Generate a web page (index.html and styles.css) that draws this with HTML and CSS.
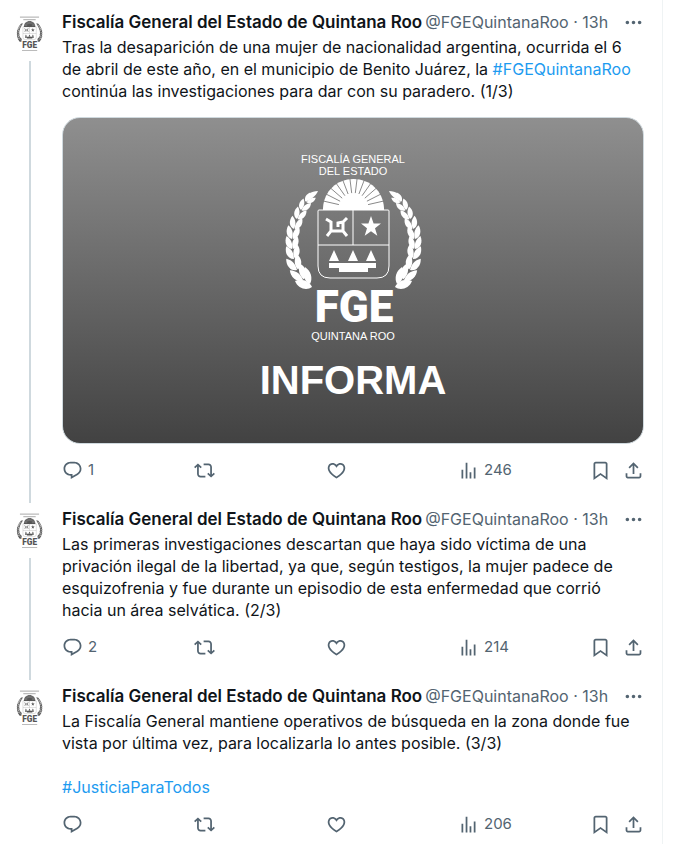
FILE: index.html
```html
<!doctype html>
<html lang="es">
	<head>
		<meta charset="utf-8"/>
		<meta name="viewport" content="width=device-width, initial-scale=1"/>
		<title>Fiscalía General del Estado de Quintana Roo</title>
		<link rel="stylesheet" href="styles.css">
	</head>
	<body>
		<svg class="sprite" aria-hidden="true">
			<symbol id="reply" viewBox="0 0 24 24"><path d="M1.751 10c0-4.42 3.584-8 8.005-8h4.366c4.49 0 8.129 3.64 8.129 8.13 0 2.96-1.607 5.68-4.196 7.11l-8.054 4.46v-3.69h-.067c-4.49.1-8.183-3.51-8.183-8.01zm8.005-6c-3.317 0-6.005 2.69-6.005 6 0 3.37 2.77 6.08 6.138 6.01l.351-.01h1.761v2.3l5.087-2.81c1.951-1.08 3.163-3.13 3.163-5.36 0-3.39-2.744-6.13-6.129-6.13H9.756z"/></symbol>
			<symbol id="retweet" viewBox="0 0 24 24"><path d="M4.5 3.88l4.432 4.14-1.364 1.46L5.5 7.55V16c0 1.1.896 2 2 2H13v2H7.5c-2.209 0-4-1.79-4-4V7.55L1.432 9.48.068 8.02 4.5 3.88zM16.5 6H11V4h5.5c2.209 0 4 1.79 4 4v8.45l2.068-1.93 1.364 1.46-4.432 4.14-4.432-4.14 1.364-1.46 2.068 1.93V8c0-1.1-.896-2-2-2z"/></symbol>
			<symbol id="like" viewBox="0 0 24 24"><path d="M16.697 5.5c-1.222-.06-2.679.51-3.89 2.16l-.805 1.09-.806-1.09C9.984 6.01 8.526 5.44 7.304 5.5c-1.243.07-2.349.78-2.91 1.91-.552 1.12-.633 2.78.479 4.82 1.074 1.97 3.257 4.27 7.129 6.61 3.87-2.34 6.052-4.64 7.126-6.61 1.111-2.04 1.03-3.7.477-4.82-.561-1.13-1.666-1.84-2.908-1.91zm4.187 7.69c-1.351 2.48-4.001 5.12-8.379 7.67l-.503.3-.504-.3c-4.379-2.55-7.029-5.19-8.382-7.67-1.36-2.5-1.41-4.86-.514-6.67.887-1.79 2.647-2.91 4.601-3.01 1.651-.09 3.368.56 4.798 2.01 1.429-1.45 3.146-2.1 4.796-2.01 1.954.1 3.714 1.22 4.601 3.01.896 1.81.846 4.17-.514 6.67z"/></symbol>
			<symbol id="views" viewBox="0 0 24 24"><path d="M8.75 21V3h2v18h-2zM18 21V8.5h2V21h-2zM4 21l.004-10h2L6 21H4zm9.248 0v-7h2v7h-2z"/></symbol>
			<symbol id="bookmark" viewBox="0 0 24 24"><path d="M4 4.5C4 3.12 5.119 2 6.5 2h11C18.881 2 20 3.12 20 4.5v18.44l-8-5.71-8 5.71V4.5zM6.5 4c-.276 0-.5.22-.5.5v14.56l6-4.29 6 4.29V4.5c0-.28-.224-.5-.5-.5h-11z"/></symbol>
			<symbol id="share" viewBox="0 0 24 24"><path d="M12 2.59l5.7 5.7-1.41 1.42L13 6.41V16h-2V6.41l-3.3 3.3-1.41-1.42L12 2.59zM21 15l-.02 3.51c0 1.38-1.12 2.49-2.5 2.49H5.5C4.11 21 3 19.88 3 18.5V15h2v3.5c0 .28.22.5.5.5h12.98c.28 0 .5-.22.5-.5L19 15h2z"/></symbol>
			<symbol id="more" viewBox="0 0 24 24"><path d="M3 12c0-1.1.9-2 2-2s2 .9 2 2-.9 2-2 2-2-.9-2-2zm9 2c1.1 0 2-.9 2-2s-.9-2-2-2-2 .9-2 2 .9 2 2 2zm7 0c1.1 0 2-.9 2-2s-.9-2-2-2-2 .9-2 2 .9 2 2 2z"/></symbol>

			<!-- laurel leaves, one pair -->
			<g id="leaf">
				<path d="M0 0C-6-1-8-8-5-14C0-10 1-6 0 0z"/>
				<path d="M1 0C-1-6 2-11 6-14C9-8 7-2 1 0z"/>
			</g>
			<g id="laurel">
				<path d="M29 135C24 139 15 137 12 129C19 126 26 129 29 135z"/>
				<path d="M27 132C20 129 20 121 22 115C28 119 30 126 27 132z"/>
				<use href="#leaf" transform="translate(20 128) rotate(-34) scale(1.1)"/>
				<use href="#leaf" transform="translate(14 118) rotate(-24) scale(1.05)"/>
				<use href="#leaf" transform="translate(11 107) rotate(-12)"/>
				<use href="#leaf" transform="translate(9 97) rotate(-3) scale(.95)"/>
				<use href="#leaf" transform="translate(9 87) rotate(5) scale(.95)"/>
				<use href="#leaf" transform="translate(11 77) rotate(13) scale(.9)"/>
				<use href="#leaf" transform="translate(14 67) rotate(24) scale(.85)"/>
				<use href="#leaf" transform="translate(18 58) rotate(32) scale(.8)"/>
				<use href="#leaf" transform="translate(23 50) rotate(44) scale(.7)"/>
				<path d="M22 49C23 43 28 39 35 39C33 44 28 48 22 49z"/>
			</g>
			<mask id="rays">
				<rect width="140" height="192" fill="#fff"/>
				<path stroke="#000" stroke-width=".9" d="M72.300 41.100L74.400 24.200M75.900 42L82 26.100M79.100 43.700L88.900 29.800M81.800 46.200L94.700 35M83.900 49.200L99 41.500M85.100 52.600L101.700 48.800M68.700 41.100L66.600 24.200M65.100 42L59 26.100M61.900 43.700L52.100 29.800M59.200 46.200L46.300 35M57.100 49.200L42 41.500M55.900 52.600L39.300 48.800"/>
			</mask>
			<!-- sun, shield and laurels -->
			<g id="emblem">
				<use href="#laurel"/>
				<use href="#laurel" transform="translate(141 0) scale(-1 1)"/>
				<path mask="url(#rays)" d="M40 58v-2C41 39 54 27 70.500 27S100 39 101 56v2z"/>
				<path class="emblem-line" d="M36 58h69q1 0 1 1v55q0 12-12 12H47q-12 0-12-12V59q0-1 1-1zM70 58v35M35 93h71"/>
				<path class="emblem-bird" d="M43 67l5 3v9l-4 5M48 79h12l4 5M60 80V70l4-4M60 70l-5 1v4"/>
				<path d="M88 64l2.600 7.500H98l-6 4.700 2.300 7.500L88 79.200l-6.300 4.500L84 76.200l-6-4.700h7.400z"/>
				<path d="M51 98l5 11H46zM70 98l5 11H65zM88 98l5 11H83zM46 111h47v5h-8v4H56v-4H46z"/>
			</g>
		</svg>

		<main class="timeline">
			<article class="tweet">
				<div class="thread">
					<a class="avatar" href="#" aria-label="FGEQuintanaRoo">
						<svg viewBox="0 0 140 192">
							<path class="avatar-line" d="M19 6h102M37 19h66M30 184h81"/>
							<use href="#emblem"/>
							<text class="emblem-logo" x="71" y="170">FGE</text>
						</svg>
					</a>
				</div>
				<div class="content">
					<header class="head">
						<a class="name" href="#">Fiscalía General del Estado de Quintana Roo</a>
						<span class="handle">@FGEQuintanaRoo · <time>13h</time></span>
						<button class="more" aria-label="Más"><svg class="icon"><use href="#more"/></svg></button>
					</header>
					<p class="text">Tras la desaparición de una mujer de nacionalidad argentina, ocurrida el 6 de abril de este año, en el municipio de Benito Juárez, la <a href="#">#FGEQuintanaRoo</a> continúa las investigaciones para dar con su paradero. (1/3)</p>
					<div class="media">
						<svg class="media-emblem" viewBox="0 0 140 192">
							<text class="emblem-text" x="70" y="11">FISCALÍA GENERAL</text>
							<text class="emblem-text" x="70" y="23">DEL ESTADO</text>
							<use href="#emblem"/>
							<text class="emblem-logo" x="71" y="170">FGE</text>
							<text class="emblem-text" x="70" y="188">QUINTANA ROO</text>
						</svg>
						<strong class="media-title">INFORMA</strong>
					</div>
					<div class="actions">
						<button aria-label="Responder"><svg class="icon"><use href="#reply"/></svg><span>1</span></button>
						<button aria-label="Repostear"><svg class="icon"><use href="#retweet"/></svg></button>
						<button aria-label="Me gusta"><svg class="icon"><use href="#like"/></svg></button>
						<button aria-label="Vistas"><svg class="icon"><use href="#views"/></svg><span>246</span></button>
						<div class="tools">
							<button aria-label="Guardar"><svg class="icon"><use href="#bookmark"/></svg></button>
							<button aria-label="Compartir"><svg class="icon"><use href="#share"/></svg></button>
						</div>
					</div>
				</div>
			</article>

			<article class="tweet">
				<div class="thread">
					<a class="avatar" href="#" aria-label="FGEQuintanaRoo">
						<svg viewBox="0 0 140 192">
							<path class="avatar-line" d="M19 6h102M37 19h66M30 184h81"/>
							<use href="#emblem"/>
							<text class="emblem-logo" x="71" y="170">FGE</text>
						</svg>
					</a>
				</div>
				<div class="content">
					<header class="head">
						<a class="name" href="#">Fiscalía General del Estado de Quintana Roo</a>
						<span class="handle">@FGEQuintanaRoo · <time>13h</time></span>
						<button class="more" aria-label="Más"><svg class="icon"><use href="#more"/></svg></button>
					</header>
					<p class="text">Las primeras investigaciones descartan que haya sido víctima de una privación ilegal de la libertad, ya que, según testigos, la mujer padece de esquizofrenia y fue durante un episodio de esta enfermedad que corrió hacia un área selvática. (2/3)</p>
					<div class="actions">
						<button aria-label="Responder"><svg class="icon"><use href="#reply"/></svg><span>2</span></button>
						<button aria-label="Repostear"><svg class="icon"><use href="#retweet"/></svg></button>
						<button aria-label="Me gusta"><svg class="icon"><use href="#like"/></svg></button>
						<button aria-label="Vistas"><svg class="icon"><use href="#views"/></svg><span>214</span></button>
						<div class="tools">
							<button aria-label="Guardar"><svg class="icon"><use href="#bookmark"/></svg></button>
							<button aria-label="Compartir"><svg class="icon"><use href="#share"/></svg></button>
						</div>
					</div>
				</div>
			</article>

			<article class="tweet">
				<div class="thread">
					<a class="avatar" href="#" aria-label="FGEQuintanaRoo">
						<svg viewBox="0 0 140 192">
							<path class="avatar-line" d="M19 6h102M37 19h66M30 184h81"/>
							<use href="#emblem"/>
							<text class="emblem-logo" x="71" y="170">FGE</text>
						</svg>
					</a>
				</div>
				<div class="content">
					<header class="head">
						<a class="name" href="#">Fiscalía General del Estado de Quintana Roo</a>
						<span class="handle">@FGEQuintanaRoo · <time>13h</time></span>
						<button class="more" aria-label="Más"><svg class="icon"><use href="#more"/></svg></button>
					</header>
					<p class="text">La Fiscalía General mantiene operativos de búsqueda en la zona donde fue vista por última vez, para localizarla lo antes posible. (3/3)<br><br><a href="#">#JusticiaParaTodos</a></p>
					<div class="actions">
						<button aria-label="Responder"><svg class="icon"><use href="#reply"/></svg></button>
						<button aria-label="Repostear"><svg class="icon"><use href="#retweet"/></svg></button>
						<button aria-label="Me gusta"><svg class="icon"><use href="#like"/></svg></button>
						<button aria-label="Vistas"><svg class="icon"><use href="#views"/></svg><span>206</span></button>
						<div class="tools">
							<button aria-label="Guardar"><svg class="icon"><use href="#bookmark"/></svg></button>
							<button aria-label="Compartir"><svg class="icon"><use href="#share"/></svg></button>
						</div>
					</div>
				</div>
			</article>
		</main>
	</body>
</html>
```
FILE: styles.css
```css
*{margin:0;padding:0;box-sizing:border-box;}
body{
	background:#fff;
	color:#0f1419;
	font-family:Inter,"Liberation Sans",sans-serif;
	font-size:16px;
	line-height:22px;
}
a{
	color:#1d9bf0;
	text-decoration:none;
}
button{
	display:flex;
	align-items:center;
	border:0;
	background:none;
	color:inherit;
	font:inherit;
	cursor:pointer;
}
.sprite{
	position:absolute;
	width:0;
	height:0;
}
.timeline{
	margin-right:14px;
	border-right:1px solid #eff3f4;
}
.tweet{
	display:flex;
	gap:10px;
	padding:0 18px 0 7px;
}

/* avatar column with the thread line */
.thread{
	flex:none;
	width:45px;
	display:flex;
	flex-direction:column;
	align-items:center;
	gap:5px;
}
.thread:before,.thread:after{
	content:'';
	width:2px;
	background:#cfd9de;
}
.thread:before{
	height:6px;
}
.thread:after{
	flex:1;
}
.tweet:first-child .thread:before,.tweet:last-child .thread:after{
	background:none;
}
.avatar{
	display:flex;
	align-items:center;
	justify-content:center;
	width:45px;
	height:45px;
	border-radius:50%;
	color:#555;
}
.avatar svg{
	width:27px;
	height:36px;
	fill:currentColor;
}
.avatar-line{
	stroke:#bbb;
	stroke-width:6px;
}

.content{
	flex:1;
	min-width:0;
	padding:11px 0 16px;
}
.head{
	display:flex;
	align-items:center;
	gap:3px;
	margin-bottom:3px;
	white-space:nowrap;
}
.name{
	overflow:hidden;
	text-overflow:ellipsis;
	color:#0f1419;
	font-size:17px;
	font-weight:600;
}
.handle{
	color:#536471;
}
.more{
	margin-left:auto;
	color:#536471;
}
.icon{
	width:21px;
	height:21px;
	fill:currentColor;
}

/* picture card */
.media{
	display:flex;
	flex-direction:column;
	align-items:center;
	aspect-ratio:582/327;
	margin-top:15px;
	padding-top:34px;
	border:1px solid #cfd9de;
	border-radius:18px;
	background:linear-gradient(#8f8f8f,#424242);
	color:#fff;
}
.media-emblem{
	width:140px;
	height:192px;
	fill:currentColor;
}
.media-title{
	margin-top:14px;
	font:bold 40px/44px "Liberation Sans",sans-serif;
}
.emblem-text{
	font:11px "Liberation Sans",sans-serif;
	text-anchor:middle;
}
.emblem-logo{
	font:900 44px Roboto,"Liberation Sans",sans-serif;
	text-anchor:middle;
}
.emblem-line{
	fill:none;
	stroke:currentColor;
}
.emblem-bird{
	fill:none;
	stroke:currentColor;
	stroke-width:3px;
}

.actions{
	display:flex;
	align-items:center;
	margin-top:15px;
	color:#536471;
	font-size:15px;
}
.actions > button{
	flex:1;
	gap:5px;
}
.tools{
	display:flex;
	gap:12px;
}
```
